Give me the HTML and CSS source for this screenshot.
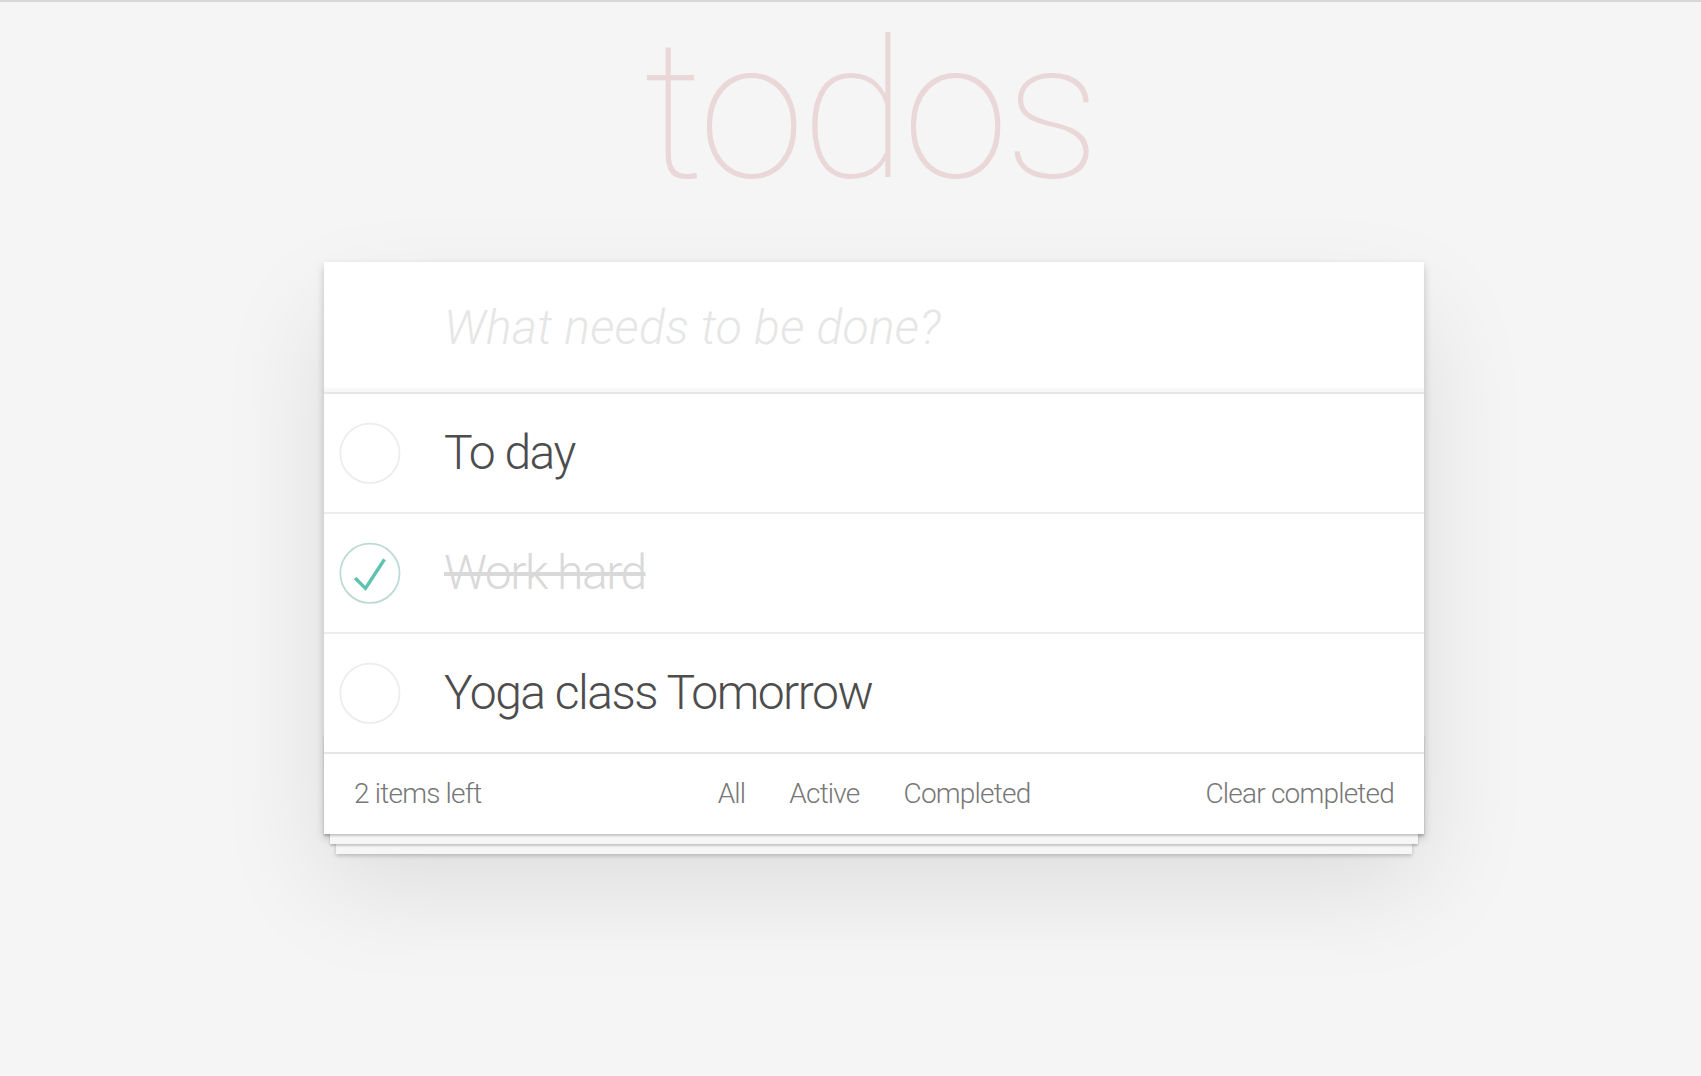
FILE: index.html
```html
<!DOCTYPE html>
<html lang="en">
<head>
<meta charset="utf-8">
<title>todos</title>
<link rel="stylesheet" href="styles.css">
</head>
<body>
<div class="page">
  <section class="todoapp">
    <h1 class="title">todos</h1>
    <div class="panel">
      <header class="header">
        <input class="new-todo" placeholder="What needs to be done?">
      </header>
      <ul class="todo-list">
        <li class="todo">
          <svg class="toggle" width="80" height="80" viewBox="-10 -18 100 135"><circle cx="50" cy="50" r="50" fill="none" stroke="#ededed" stroke-width="3"/></svg>
          <span class="label">To day</span>
        </li>
        <li class="todo completed">
          <svg class="toggle" width="80" height="80" viewBox="-10 -18 100 135"><circle cx="50" cy="50" r="50" fill="none" stroke="#bddad5" stroke-width="3"/><path fill="#5dc2af" d="M72 25L42 71 27 56l-4 4 20 20 34-52z"/></svg>
          <span class="label">Work hard</span>
        </li>
        <li class="todo">
          <svg class="toggle" width="80" height="80" viewBox="-10 -18 100 135"><circle cx="50" cy="50" r="50" fill="none" stroke="#ededed" stroke-width="3"/></svg>
          <span class="label">Yoga class Tomorrow</span>
        </li>
      </ul>
      <footer class="footer">
        <span class="todo-count">2 items left</span>
        <ul class="filters">
          <li><a class="filter">All</a></li>
          <li><a class="filter">Active</a></li>
          <li><a class="filter">Completed</a></li>
        </ul>
        <span class="clear-completed">Clear completed</span>
      </footer>
    </div>
  </section>
</div>
</body>
</html>
```
FILE: styles.css
```css
html, body {
  margin: 0;
  padding: 0;
}
body {
  background: #f5f5f5;
  border-top: 2px solid #d8d8d8;
  font-family: Roboto, "Liberation Sans", sans-serif;
  font-weight: 300;
  color: #4d4d4d;
  min-height: 1074px;
}
.page {
  padding-left: 47px;
  padding-top: 13px;
}
.todoapp {
  width: 1100px;
  margin: 0 auto;
}
.title {
  margin: 0 0 55px;
  font-family: Roboto, sans-serif;
  font-weight: 100;
  font-size: 193px;
  line-height: 192px;
  height: 192px;
  letter-spacing: -4px;
  text-align: center;
  color: rgba(175, 47, 47, 0.15);
  padding-right: 8px;
}
.panel {
  background: #fff;
  box-shadow: 0 4px 8px 0 rgba(0,0,0,0.2), 0 50px 100px 0 rgba(0,0,0,0.1);
}
.header {
  border-bottom: 2px solid #e6e6e6;
}
.new-todo {
  display: block;
  box-sizing: border-box;
  width: 100%;
  height: 130px;
  margin: 0;
  border: 0;
  outline: none;
  padding: 0 32px 0 120px;
  font-family: Roboto, sans-serif;
  font-weight: 300;
  font-size: 48px;
  letter-spacing: 0.3px;
  color: #4d4d4d;
  background: #fff;
  box-shadow: inset 0 -4px 2px rgba(0,0,0,0.03);
}
.new-todo::placeholder {
  font-style: italic;
  font-weight: 300;
  color: #e6e6e6;
}
.todo-list {
  list-style: none;
  margin: 0;
  padding: 0;
}
.todo {
  display: flex;
  align-items: center;
  height: 118px;
  border-bottom: 2px solid #ededed;
}
.todo:last-child {
  border-bottom: 0;
}
.toggle {
  flex: none;
  width: 80px;
  height: 80px;
  margin: 0 40px 0 0;
}
.label {
  font-size: 48px;
  line-height: 58px;
  letter-spacing: -1.5px;
  color: #4d4d4d;
  white-space: nowrap;
}
.completed .label {
  color: #d9d9d9;
  text-decoration: line-through;
}
.footer {
  position: relative;
  display: flex;
  align-items: center;
  height: 80px;
  padding: 0 30px;
  border-top: 2px solid #e6e6e6;
  color: #777;
  font-size: 28px;
  line-height: 40px;
  letter-spacing: -0.8px;
}
.footer::before {
  content: "";
  position: absolute;
  left: 0;
  right: 0;
  bottom: 0;
  height: 100px;
  overflow: hidden;
  box-shadow: 0 2px 2px rgba(0,0,0,0.2),
              0 16px 0 -6px #f6f6f6,
              0 18px 2px -6px rgba(0,0,0,0.2),
              0 32px 0 -12px #f6f6f6,
              0 34px 4px -12px rgba(0,0,0,0.2);
  pointer-events: none;
}
.todo-count {
  flex: 1 1 0;
  position: relative;
}
.filters {
  list-style: none;
  margin: 0;
  padding: 0;
  display: flex;
  position: relative;
}
.filter {
  display: block;
  margin: 6px;
  padding: 0 14px;
  border: 2px solid transparent;
  border-radius: 6px;
  color: inherit;
}
.clear-completed {
  flex: 1 1 0;
  text-align: right;
  position: relative;
}
```
